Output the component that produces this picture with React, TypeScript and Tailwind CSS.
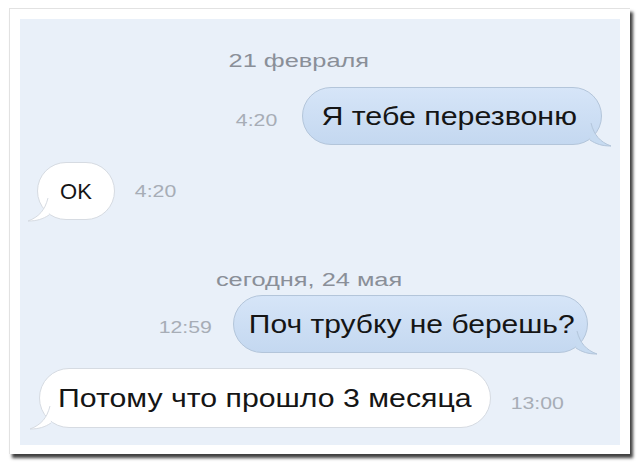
import React from "react";

const font = { fontFamily: '"Liberation Sans", Arial, sans-serif' };

type Side = "out" | "in";

// little curved tail under the bubble corner
const Tail = ({ side }: { side: Side }) =>
  side === "out" ? (
    <svg className="absolute -right-[11px] bottom-[-3px]" width="22" height="24" viewBox="0 0 22 24">
      <path
        d="M1 0 C 4 12, 10 19, 21 23 C 12 23, 6 21, 0 17"
        fill="#c7dbf1"
        stroke="#b3c5da"
        strokeWidth="1"
      />
    </svg>
  ) : (
    <svg className="absolute -left-[11px] bottom-[-3px]" width="22" height="24" viewBox="0 0 22 24">
      <path
        d="M21 0 C 18 12, 12 19, 1 23 C 10 23, 16 21, 22 17"
        fill="#ffffff"
        stroke="#d6dbe2"
        strokeWidth="1"
      />
    </svg>
  );

const Bubble = ({
  side,
  children,
  className,
}: {
  side: Side;
  children: React.ReactNode;
  className: string;
}) => (
  <div
    className={`relative flex shrink-0 items-center justify-center rounded-[30px] border leading-none text-[#151515] ${
      side === "out"
        ? "border-[#b3c5da] bg-gradient-to-b from-[#d6e5f8] to-[#c4d8f0]"
        : "border-[#d6dbe2] bg-white"
    } ${className}`}
  >
    <Tail side={side} />
    <span className="relative inline-block whitespace-nowrap">{children}</span>
  </div>
);

// text in the screenshot is stretched sideways, so widen the glyphs a bit
const Wide = ({ children, className }: { children: React.ReactNode; className: string }) => (
  <span className={`inline-block whitespace-nowrap ${className}`}>{children}</span>
);

const Time = ({ children, className }: { children: React.ReactNode; className: string }) => (
  <div
    className={`flex shrink-0 justify-center text-[17px] leading-none text-[#a7adb6] ${className}`}
  >
    <Wide className="scale-x-[1.25]">{children}</Wide>
  </div>
);

const DateLabel = ({ children, className }: { children: React.ReactNode; className: string }) => (
  <div className={`flex justify-center text-[18px] leading-none text-[#8a8f98] ${className}`}>
    <Wide className="scale-x-[1.41]">{children}</Wide>
  </div>
);

export default function App() {
  return (
    <div className="h-[466px] w-[641px] bg-white pl-[9px] pt-[8px]" style={font}>
      <div className="h-[446px] w-[621px] border-l border-t border-[#e2e2e2] bg-white pl-[10px] pt-[10px] shadow-[3px_4px_3px_rgba(0,0,0,0.75)]">
        <div className="flex h-[426px] w-[600px] flex-col bg-[#e9f0f9] pt-[33px]">
          <DateLabel className="ml-[209px] w-[139px]">21 февраля</DateLabel>

          <div className="mt-[17px] flex items-center justify-end gap-[25px] pr-[18px]">
            <Time className="mt-[8px] w-[41px]">4:20</Time>
            <Bubble side="out" className="h-[58px] w-[300px] text-[25px]">
              <Wide className="-ml-[6px] scale-x-[1.215]">Я тебе перезвоню</Wide>
            </Bubble>
          </div>

          <div className="mt-[17px] flex items-center gap-[20px] pl-[17px]">
            <Bubble side="in" className="h-[58px] w-[78px] text-[22px]">
              <Wide className="mt-[2px] scale-x-[1.0]">OK</Wide>
            </Bubble>
            <Time className="w-[41px]">4:20</Time>
          </div>

          <DateLabel className="ml-[195px] mt-[51px] w-[188px]">сегодня, 24 мая</DateLabel>

          <div className="mt-[6px] flex items-center justify-end gap-[22px] pr-[32px]">
            <Time className="mt-[6px] w-[52px]">12:59</Time>
            <Bubble side="out" className="h-[58px] w-[355px] text-[25px]">
              <Wide className="ml-[3px] scale-x-[1.2]">Поч трубку не берешь?</Wide>
            </Bubble>
          </div>

          <div className="mt-[15px] flex items-center gap-[18px] pl-[19px]">
            <Bubble side="in" className="h-[60px] w-[452px] text-[25px]">
              <Wide className="scale-x-[1.21]">Потому что прошло 3 месяца</Wide>
            </Bubble>
            <Time className="mt-[10px] w-[57px]">13:00</Time>
          </div>
        </div>
      </div>
    </div>
  );
}
